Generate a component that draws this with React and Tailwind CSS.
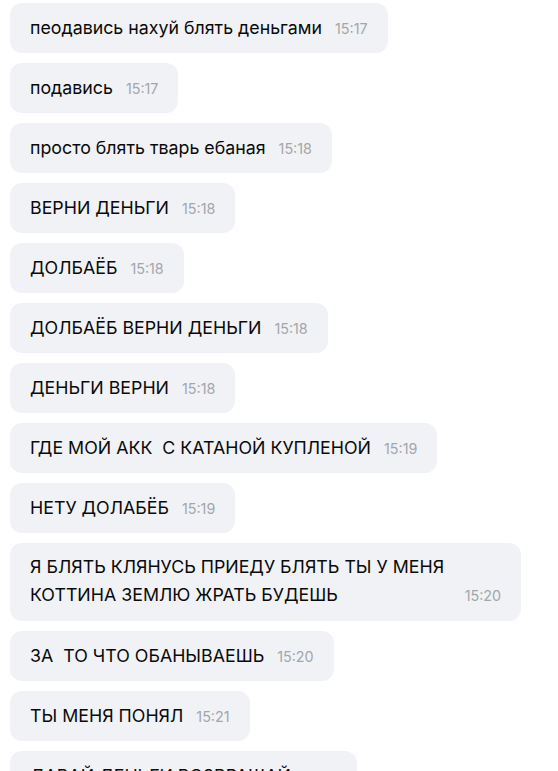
import React from 'react';

const messages = [
  { text: 'пеодавись нахуй блять деньгами', time: '15:17' },
  { text: 'подавись', time: '15:17' },
  { text: 'просто блять тварь ебаная', time: '15:18' },
  { text: 'ВЕРНИ ДЕНЬГИ', time: '15:18' },
  { text: 'ДОЛБАЁБ', time: '15:18' },
  { text: 'ДОЛБАЁБ ВЕРНИ ДЕНЬГИ', time: '15:18' },
  { text: 'ДЕНЬГИ ВЕРНИ', time: '15:18' },
  { text: 'ГДЕ МОЙ АКК\u00a0 С КАТАНОЙ КУПЛЕНОЙ', time: '15:19' },
  { text: 'НЕТУ ДОЛАБЁБ', time: '15:19' },
  { lines: ['Я БЛЯТЬ КЛЯНУСЬ ПРИЕДУ БЛЯТЬ ТЫ У МЕНЯ', 'КОТТИНА ЗЕМЛЮ ЖРАТЬ БУДЕШЬ'], time: '15:20' },
  { text: 'ЗА\u00a0 ТО ЧТО ОБАНЫВАЕШЬ', time: '15:20' },
  { text: 'ТЫ МЕНЯ ПОНЯЛ', time: '15:21' },
  { text: 'ДАВАЙ ДЕНЬГИ ВОЗВРАЩАЙ', time: '15:21' },
];

const Bubble = ({ msg }) => {
  if (msg.lines) {
    return (
      <div className="w-[511px] rounded-[12px] bg-[#f0f2f5] px-5 pt-[10px] pb-[12px]">
        <div className="text-[17.8px] leading-[28px] text-[#0a0a0a]">{msg.lines[0]}</div>
        <div className="flex items-baseline justify-between">
          <span className="text-[17.8px] leading-[28px] text-[#0a0a0a]">{msg.lines[1]}</span>
          <span className="text-[14.3px] text-[#a3a6ab]">{msg.time}</span>
        </div>
      </div>
    );
  }
  return (
    <div className="self-start flex items-baseline gap-[13px] rounded-[12px] bg-[#f0f2f5] px-5 h-[50px] pt-[11px]">
      <span className="text-[17.8px] leading-[28px] text-[#0a0a0a] whitespace-pre">{msg.text}</span>
      <span className="text-[14.3px] text-[#a3a6ab]">{msg.time}</span>
    </div>
  );
};

export default function App() {
  return (
    <div
      className="h-[771px] w-[558px] overflow-hidden bg-white pl-[10px] pt-[3px]"
      style={{ fontFamily: 'Inter, "Noto Sans", sans-serif' }}
    >
      <div className="flex flex-col gap-[10px]">
        {messages.map((m, i) => (
          <Bubble key={i} msg={m} />
        ))}
      </div>
    </div>
  );
}
